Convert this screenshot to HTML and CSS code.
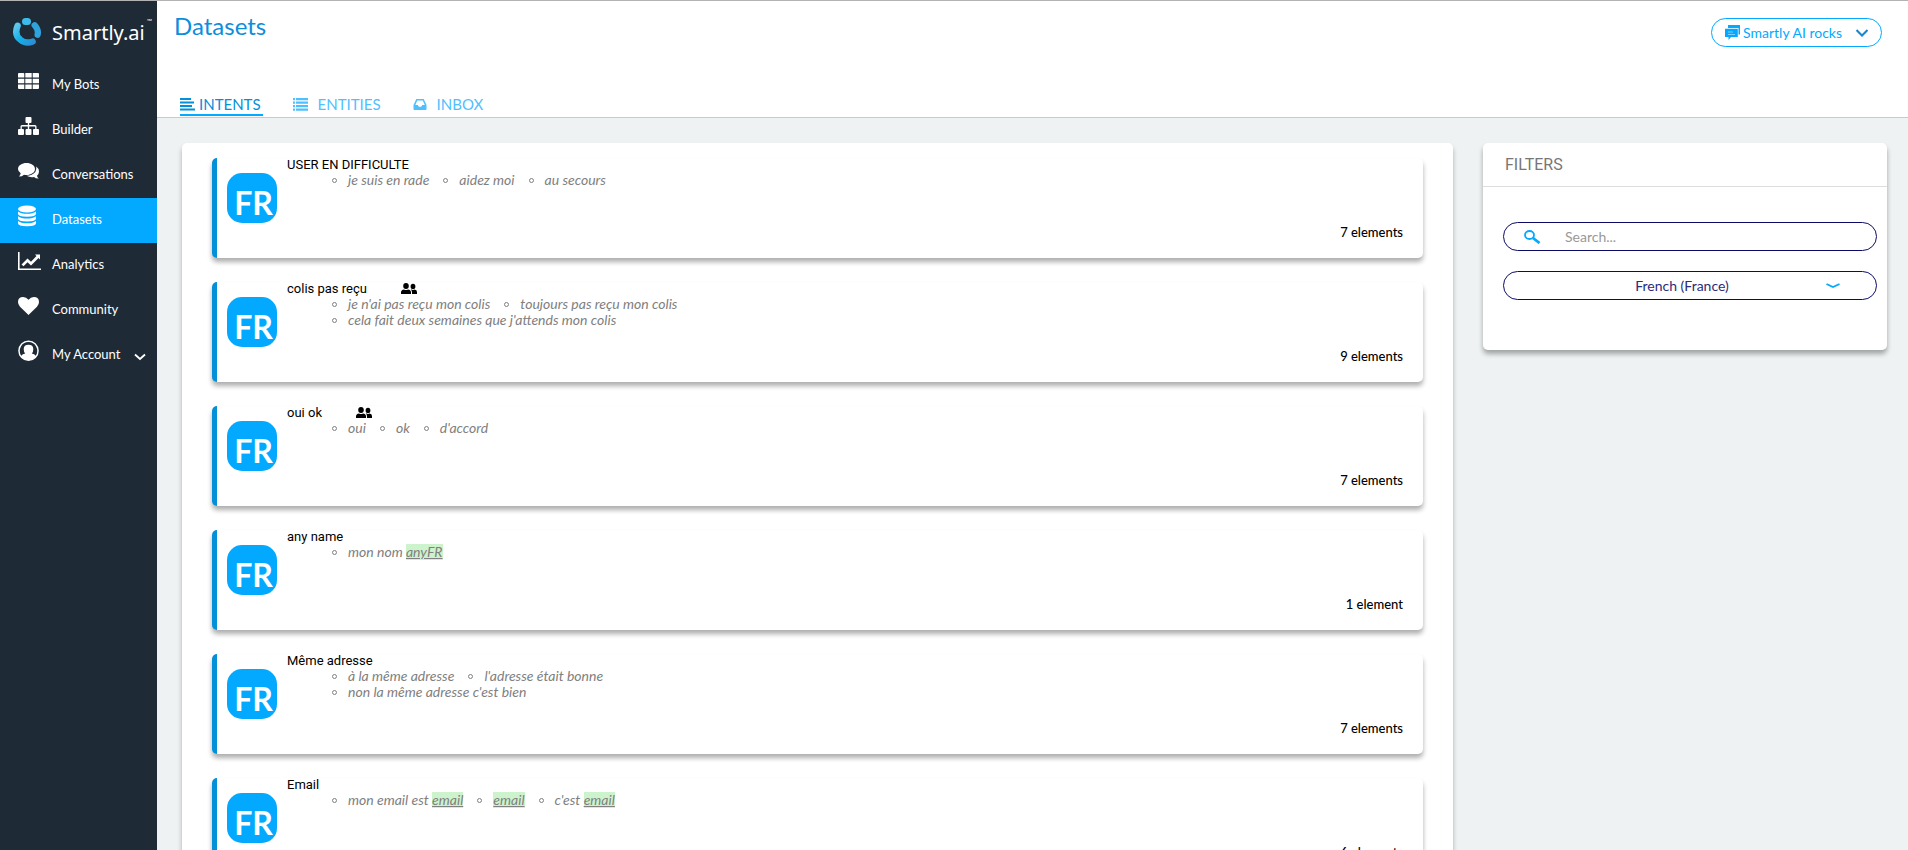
FILE: index.html
```html
<!DOCTYPE html>
<html lang="en">
<head>
<meta charset="utf-8">
<title>Smartly.ai - Datasets</title>
<link rel="stylesheet" href="styles.css">
</head>
<body>
<div class="app">
  <aside class="sidebar">
    <a class="logo" href="#">
      <svg class="logo-mark" viewBox="0 0 28 28" width="28" height="28" aria-hidden="true">
        <defs>
          <linearGradient id="ring" x1="0" y1="0" x2="1" y2="1">
            <stop offset="0" stop-color="#5cc8ee"/><stop offset="0.5" stop-color="#12b0ea"/><stop offset="1" stop-color="#2c8fd6"/>
          </linearGradient>
        </defs>
        <path d="M4.600 7.800C2.200 13.600 3.400 18.600 7.200 21.600C11 24.800 15.600 25.200 19.600 23.600" fill="none" stroke="url(#ring)" stroke-width="6.400" stroke-linecap="round"/>
        <path d="M21.600 7.200C24.600 10.400 25.400 13.600 24.600 16.800" fill="none" stroke="#2fa3de" stroke-width="6.200" stroke-linecap="round"/>
        <rect x="9" y="0" width="9" height="7" rx="3.500" fill="#3cbcec"/>
      </svg>
      <span class="logo-name">Smartly.ai</span><span class="logo-tm">™</span>
    </a>
    <nav class="menu">
      <a class="item" href="#"><svg class="ico" viewBox="0 0 22 22"><path d="M1 3h4.300q1 0 1 1v3.500H0V4q0-1 1-1zM7.300 3h6.400v4.500H7.300zM14.700 3H20q1 0 1 1v3.500h-6.300zM0 8.700h6.300v4.600H0zM7.300 8.700h6.400v4.600H7.300zM14.700 8.700H21v4.600h-6.300zM0 14.500h6.300V19H1q-1 0-1-1zM7.300 14.500h6.400V19H7.300zM14.700 14.500H21V18q0 1-1 1h-5.300z"/></svg><span>My Bots</span></a>
      <a class="item" href="#"><svg class="ico" viewBox="0 0 22 22"><path d="M8.500 2h4q1 0 1 1v4q0 1-1 1h-1.300v2H17q1.500 0 1.500 1.500V14H20q1 0 1 1v4q0 1-1 1h-4q-1 0-1-1v-4q0-1 1-1h1.200v-2.500h-6V14h1.300q1 0 1 1v4q0 1-1 1h-4q-1 0-1-1v-4q0-1 1-1h1.300v-2.500h-6V14H5q1 0 1 1v4q0 1-1 1H1q-1 0-1-1v-4q0-1 1-1h1.500v-2.500Q2.500 10 4 10h5.800V8H8.500q-1 0-1-1V3q0-1 1-1z"/></svg><span>Builder</span></a>
      <a class="item" href="#"><svg class="ico" viewBox="0 0 22 22"><path d="M8.500 3C13 3 17 5.500 17 9s-4 6-8.500 6q-1.500 0-2.500-.3Q4 16.500 1 16.600q1.400-1.400 1.700-3.300Q0 11.500 0 9c0-3.500 4-6 8.500-6z"/><path d="M18.200 6.500Q21 8.500 21 11.500q0 2.600-2 4.200.4 1.800 1.800 2.900-3 .2-4.800-1.700-4 .8-7.500-1.200 6-.1 8.800-3.700 1.600-2.500.9-5.500z"/></svg><span>Conversations</span></a>
      <a class="item active" href="#"><svg class="ico" viewBox="0 0 22 22"><ellipse cx="9" cy="4" rx="9" ry="3.500"/><path d="M0 6.500q3 2.300 9 2.300t9-2.300v2.300q0 3-9 3t-9-3zM0 11.200q3 2.300 9 2.300t9-2.300v2.300q0 3-9 3t-9-3zM0 16q3 2.300 9 2.300t9-2.300v2.200q0 3-9 3t-9-3z"/></svg><span>Datasets</span></a>
      <a class="item" href="#"><svg class="ico wide" viewBox="0 0 24 22"><path d="M0 2h1.600v16.400H23V20H0z"/><path d="M3.500 14.500l6-6 3.500 3.300L18.500 6 17 4.500h5v5L20.500 8 13 15.600l-3.500-3.400-4 4z"/></svg><span>Analytics</span></a>
      <a class="item" href="#"><svg class="ico" viewBox="0 0 22 22"><path d="M10.500 20L2 11.800Q0 9.600 0 7q0-5 5.200-5Q8.300 2 10.500 4.800 12.700 2 15.800 2 21 2 21 7q0 2.600-2 4.800z"/></svg><span>Community</span></a>
      <a class="item" href="#"><svg class="ico" viewBox="0 0 22 22"><path fill-rule="evenodd" d="M10.500.5a10.300 10.300 0 1 1 0 20.600 10.300 10.300 0 0 1 0-20.600zm0 1.600a8.700 8.700 0 0 0-7.200 13.600q1.200-2 3.900-2.200-1.500-1.800-1.500-4.300 0-4.400 4.800-4.400t4.800 4.400q0 2.500-1.500 4.300 2.700.2 3.900 2.200A8.700 8.700 0 0 0 10.500 2.100z"/></svg><span>My Account</span><svg class="caret" viewBox="0 0 12 8" width="12" height="8"><path d="M1 1.500l5 4.500 5-4.500" fill="none" stroke="#fff" stroke-width="1.800"/></svg></a>
    </nav>
  </aside>

  <div class="page">
    <header class="header">
      <div class="title-row">
        <h1>Datasets</h1>
        <button class="project" type="button">
          <svg viewBox="0 0 15 15" width="15" height="15"><path fill="#03a9ff" d="M3 0h12v9.500h-1.500V3H3z"/><path fill="#03a9ff" d="M0 3.800h12.800V12H6l-2.500 3v-3H0z"/><path d="M3 7h5M3 9.500h7" stroke="#7fd0ff" stroke-width="1"/></svg>
          <span>Smartly AI rocks</span>
          <svg class="project-caret" viewBox="0 0 12 8" width="12" height="8"><path d="M0.500 1l5.500 5.500L11.500 1" fill="none" stroke="#1a86cf" stroke-width="2"/></svg>
        </button>
      </div>
      <nav class="tabs">
        <a class="tab selected" href="#"><svg viewBox="0 0 15 13" width="15" height="13"><path d="M0 0h11v2H0zM0 3.500h14v2H0zM0 7h12v2H0zM0 10.500h15v2H0z"/></svg>INTENTS</a>
        <a class="tab" href="#"><svg viewBox="0 0 15 13" width="15" height="13"><path d="M0 0h2v2.300H0zM3 0h12v2.300H3zM0 3.500h2v2.300H0zM3 3.500h12v2.300H3zM0 7h2v2.300H0zM3 7h12v2.300H3zM0 10.500h2v2.300H0zM3 10.500h12v2.300H3z"/></svg>ENTITIES</a>
        <a class="tab" href="#"><svg viewBox="0 0 14 13" width="14" height="13"><path fill-rule="evenodd" d="M3.300 1h7.400L13.500 7v4q0 1-1 1h-11q-1 0-1-1V7zM4.300 2.600L2.300 7h2.600l.9 1.800h2.500L9.200 7h2.600l-2-4.400z"/></svg>INBOX</a>
      </nav>
    </header>

    <main class="content">
      <section class="panel" aria-label="Intents">
        <article class="card"><span class="lang">FR</span><div class="info"><h2>USER EN DIFFICULTE</h2><ul><li>je suis en rade</li><li>aidez moi</li><li>au secours</li></ul></div><span class="count">7 elements</span></article>
        <article class="card"><span class="lang">FR</span><div class="info"><h2>colis pas reçu<svg class="people" viewBox="0 0 16 12"><path d="M5 0a2.800 3 0 0 1 0 6 2.800 3 0 0 1 0-6zM0 11V9.500Q0 7 3 6.600q2 1 4 0 3 .4 3 2.900V11zM12 .8a2.400 2.600 0 0 1 0 5.200 2.400 2.600 0 0 1 0-5.200zM11 11V9.500q0-1.800-1.200-2.900h.7q1.500.9 3 0 2.500.3 2.500 2.500V11z"/></svg></h2><ul><li>je n'ai pas reçu mon colis</li><li>toujours pas reçu mon colis</li><li>cela fait deux semaines que j'attends mon colis</li></ul></div><span class="count">9 elements</span></article>
        <article class="card"><span class="lang">FR</span><div class="info"><h2>oui ok<svg class="people" viewBox="0 0 16 12"><path d="M5 0a2.800 3 0 0 1 0 6 2.800 3 0 0 1 0-6zM0 11V9.500Q0 7 3 6.600q2 1 4 0 3 .4 3 2.900V11zM12 .8a2.400 2.600 0 0 1 0 5.200 2.400 2.600 0 0 1 0-5.200zM11 11V9.500q0-1.800-1.200-2.900h.7q1.500.9 3 0 2.500.3 2.500 2.500V11z"/></svg></h2><ul><li>oui</li><li>ok</li><li>d'accord</li></ul></div><span class="count">7 elements</span></article>
        <article class="card"><span class="lang">FR</span><div class="info"><h2>any name</h2><ul><li>mon nom <mark>anyFR</mark></li></ul></div><span class="count">1 element</span></article>
        <article class="card"><span class="lang">FR</span><div class="info"><h2>Même adresse</h2><ul><li>à la même adresse</li><li>l'adresse était bonne</li><li>non la même adresse c'est bien</li></ul></div><span class="count">7 elements</span></article>
        <article class="card"><span class="lang">FR</span><div class="info"><h2>Email</h2><ul><li>mon email est <mark>email</mark></li><li><mark>email</mark></li><li>c'est <mark>email</mark></li></ul></div><span class="count">6 elements</span></article>
      </section>

      <aside class="filters">
        <h2>FILTERS</h2>
        <form class="filter-form">
          <label class="field">
            <svg viewBox="0 0 17 14" width="17" height="14" aria-hidden="true"><ellipse cx="5.500" cy="5" rx="4.500" ry="4" fill="none" stroke="#03a9ff" stroke-width="1.800"/><path d="M9 8l6.500 5" stroke="#03a9ff" stroke-width="2.800"/></svg>
            <input type="search" placeholder="Search..." aria-label="Search">
          </label>
          <label class="field">
            <select aria-label="Language"><option>French (France)</option></select>
            <svg class="field-caret" viewBox="0 0 14 6" width="14" height="6" aria-hidden="true"><path d="M0.500 1l6.500 3 6.500-3" fill="none" stroke="#03a9ff" stroke-width="1.800"/></svg>
          </label>
        </form>
      </aside>
    </main>
  </div>
</div>
</body>
</html>
```
FILE: styles.css
```css
*, *::before { box-sizing: border-box; }
body { margin: 0; font-family: Lato, "Liberation Sans", sans-serif; font-size: 14px; color: #000; }
a { color: inherit; text-decoration: none; }
h1, h2, ul { margin: 0; padding: 0; font-weight: 400; }

.app { display: flex; height: 100vh; border-top: 1px solid #b3b3b3; overflow: hidden; }

.sidebar { flex: 0 0 157px; background: #1e2b37; color: #fff; }
.logo { display: flex; align-items: center; height: 62px; padding-left: 13px; }
.logo-mark { flex: none; }
.logo-name { margin-left: 11px; font: 20px "Noto Sans", sans-serif; }
.logo-tm { align-self: flex-start; margin: 16px 0 0 2px; font-size: 7px; }
.item { display: flex; align-items: center; height: 45px; padding: 0 0 3px 18px; font-size: 13px; }
.ico { flex: none; width: 22px; height: 22px; margin: 0 12px 6px 0; fill: #fff; }
.ico.wide { width: 24px; margin-right: 10px; }
.item.active { background: #03a9ff; }
.caret { margin: 6px 0 0 14px; }

.page { flex: 1; min-width: 0; display: flex; flex-direction: column; background: #eef2f3; }
.header { display: flex; flex-direction: column; justify-content: space-between; height: 117px; background: #fff; border-bottom: 1px solid #c8cacb; }
.title-row { display: flex; justify-content: space-between; align-items: flex-start; padding: 10px 26px 0 17px; }
.title-row h1 { font-size: 24px; line-height: 30px; color: #0d8edb; }
.project { display: flex; align-items: center; height: 29px; margin-top: 7px; padding: 0 13px; border: 1px solid #03a9ff; border-radius: 15px; background: #fff; color: #03a9ff; font: 14px Lato, sans-serif; }
.project span { margin: 0 0 1px 3px; }
.project-caret { margin-left: 14px; }
.tabs { display: flex; gap: 30px; padding-left: 23px; }
.tab { display: flex; align-items: center; height: 20px; margin-bottom: 1px; padding: 0 2px 2px 0; font-size: 15px; color: #4fc0ff; border-bottom: 2px solid transparent; }
.tab svg { margin-right: 10px; fill: currentColor; }
.tab.selected { color: #0390d9; border-bottom-color: #03a9ff; }
.tab.selected svg { margin-right: 4px; }

.content { flex: 1; min-height: 0; display: flex; align-items: flex-start; gap: 30px; padding: 25px 21px 0 25px; overflow: auto; scrollbar-width: none; }
.panel { flex: 1; min-width: 0; display: flex; flex-direction: column; gap: 24px; padding: 15px 30px; background: #fff; border-radius: 5px; box-shadow: 0 4px 5px rgba(0, 0, 0, 0.28); }
.card { display: flex; gap: 10px; height: 100px; padding-left: 10px; padding-right: 20px; background: #fff; border-left: 5px solid #0390d9; border-radius: 5px; box-shadow: 0 4px 5px rgba(0, 0, 0, 0.32); }
.lang { flex: none; width: 50px; height: 50px; margin-top: 15px; padding-left: 3px; border-radius: 15px; background: #03a9ff; color: #fff; font: 700 32px/59px Lato, sans-serif; text-align: center; }
.info { flex: 1; }
.info h2 { display: flex; align-items: center; font: 13px/14px Roboto, sans-serif; }
.people { width: 16px; height: 12px; margin-left: 34px; }
.info ul { display: flex; flex-wrap: wrap; width: 440px; padding-left: 45px; list-style: none; column-gap: 14px; }
.info li { display: flex; font-size: 14px; line-height: 16px; font-style: italic; color: #808080; white-space: pre; }
.info li::before { content: ""; width: 5px; height: 5px; margin: 6px 11px 0 0; border: 1px solid #808080; border-radius: 50%; }
mark { background: #cdf3cd; color: inherit; text-decoration: underline; }
.count { align-self: flex-end; margin-bottom: 18px; font-size: 13px; line-height: 16px; font-weight: 500; }

.filters { flex: 0 0 404px; padding-bottom: 50px; background: #fff; border-radius: 5px; box-shadow: 0 4px 5px rgba(0, 0, 0, 0.32); }
.filters h2 { height: 44px; padding-left: 22px; border-bottom: 1px solid #ddd; font: 16px/44px Roboto, sans-serif; color: #777; }
.filter-form { display: grid; gap: 20px; padding: 35px 10px 0 20px; }
.field { display: flex; align-items: center; height: 29px; padding: 0 20px; border: 1px solid #0c0c66; border-radius: 15px; }
.field input, .field select { flex: 1; min-width: 0; border: 0; outline: 0; background: none; font: 14px Lato, sans-serif; color: #2c2c78; appearance: none; }
.field input { margin-left: 22px; }
.field input::placeholder { color: #999; }
.field select { padding-left: 14px; text-align-last: center; }
.field-caret { margin-right: 16px; }
```
